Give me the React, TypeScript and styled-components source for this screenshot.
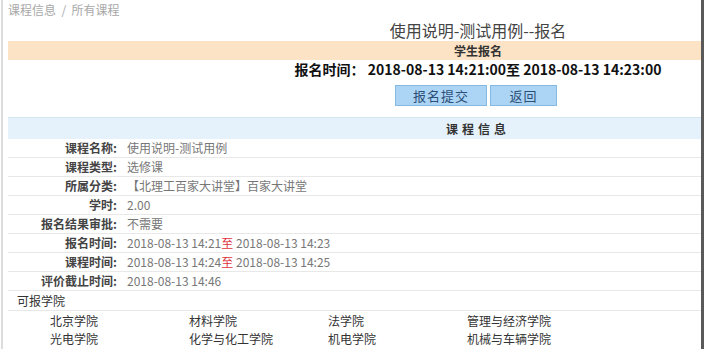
import React from "react";
import styled, { createGlobalStyle } from "styled-components";

const GlobalStyle = createGlobalStyle`
  html, body { margin: 0; padding: 0; background: #fff; }
  body { font-family: "Noto Sans CJK SC", "Noto Sans", "Liberation Sans", sans-serif; }
`;

const Frame = styled.div`
  display: flex;
  width: 704px;
  height: 349px;
  overflow: hidden;
`;

const LeftRule = styled.div`
  width: 2px;
  margin-left: 1px;
  background: #dcdcdc;
  flex: none;
`;

const Viewport = styled.div`
  flex: 1;
  overflow: hidden;
  padding-left: 5px;
`;

const RightEdge = styled.div`
  width: 3px;
  flex: none;
  background: #5a5a5a;
`;

const Page = styled.div`
  width: 940px;
`;

const Breadcrumb = styled.div`
  height: 20px;
  line-height: 20px;
  margin-top: 0px;
  font-size: 12px;
  color: #a8a8a8;
  white-space: pre;
`;

const Title = styled.div`
  height: 21px;
  line-height: 20px;
  text-align: center;
  font-size: 16px;
  color: #444;
`;

const OrangeBar = styled.div`
  height: 19px;
  line-height: 19px;
  background: #fce3c6;
  text-align: center;
  font-size: 12px;
  font-weight: bold;
  color: #333;
`;

const TimeLine = styled.div`
  height: 19px;
  line-height: 19px;
  text-align: center;
  font-size: 14px;
  font-weight: bold;
  color: #111;
  white-space: pre;
`;

const ButtonRow = styled.div`
  display: flex;
  justify-content: center;
  gap: 3px;
  margin-top: 6px;
  padding-right: 4px;
`;

const Btn = styled.button<{ $w: number }>`
  width: ${(p) => p.$w}px;
  height: 21px;
  padding: 0;
  border: 1px solid #86b9e2;
  background: #acd4f4;
  color: #2c4f78;
  font-family: inherit;
  font-size: 13px;
  line-height: 19px;
  letter-spacing: 1px;
`;

const InfoHeader = styled.div`
  margin-top: 11px;
  height: 21px;
  line-height: 21px;
  background: #e6f2fb;
  border-top: 1px solid #d6e7f4;
  text-align: center;
  font-size: 12px;
  font-weight: bold;
  letter-spacing: 4px;
  color: #333;
`;

const Row = styled.div`
  display: grid;
  grid-template-columns: 109px 1fr;
  column-gap: 10px;
  height: 18px;
  line-height: 18px;
  border-bottom: 1px solid #e8e8e8;
  font-size: 12px;
`;

const Label = styled.div`
  text-align: right;
  font-weight: bold;
  color: #444;
`;

const Value = styled.div`
  color: #777;
  white-space: pre;
`;

const Red = styled.span`
  color: #e0323c;
`;

const SectionTitle = styled.div`
  height: 19px;
  line-height: 19px;
  padding-left: 9px;
  font-size: 12px;
  color: #333;
  border-bottom: 1px solid #e8e8e8;
`;

const CollegeGrid = styled.div`
  display: grid;
  grid-template-columns: repeat(4, 139px);
  grid-auto-rows: 18px;
  padding-left: 42px;
  padding-top: 1px;
  font-size: 12px;
  line-height: 18px;
  color: #333;
`;

const rows: [string, React.ReactNode][] = [
  ["课程名称:", "使用说明-测试用例"],
  ["课程类型:", "选修课"],
  ["所属分类:", "【北理工百家大讲堂】百家大讲堂"],
  ["学时:", "2.00"],
  ["报名结果审批:", "不需要"],
  ["报名时间:", <>2018-08-13 14:21<Red>至</Red> 2018-08-13 14:23</>],
  ["课程时间:", <>2018-08-13 14:24<Red>至</Red> 2018-08-13 14:25</>],
  ["评价截止时间:", "2018-08-13 14:46"],
];

const colleges = [
  "北京学院",
  "材料学院",
  "法学院",
  "管理与经济学院",
  "光电学院",
  "化学与化工学院",
  "机电学院",
  "机械与车辆学院",
];

export default function App() {
  return (
    <>
      <GlobalStyle />
      <Frame>
        <LeftRule />
        <Viewport>
          <Page>
            <Breadcrumb>课程信息  /  所有课程</Breadcrumb>
            <Title>使用说明-测试用例--报名</Title>
            <OrangeBar>学生报名</OrangeBar>
            <TimeLine>报名时间： 2018-08-13 14:21:00至 2018-08-13 14:23:00</TimeLine>
            <ButtonRow>
              <Btn $w={92}>报名提交</Btn>
              <Btn $w={67}>返回</Btn>
            </ButtonRow>
            <InfoHeader>课程信息</InfoHeader>
            {rows.map(([l, v]) => (
              <Row key={l}>
                <Label>{l}</Label>
                <Value>{v}</Value>
              </Row>
            ))}
            <SectionTitle>可报学院</SectionTitle>
            <CollegeGrid>
              {colleges.map((c) => (
                <div key={c}>{c}</div>
              ))}
            </CollegeGrid>
          </Page>
        </Viewport>
        <RightEdge />
      </Frame>
    </>
  );
}
